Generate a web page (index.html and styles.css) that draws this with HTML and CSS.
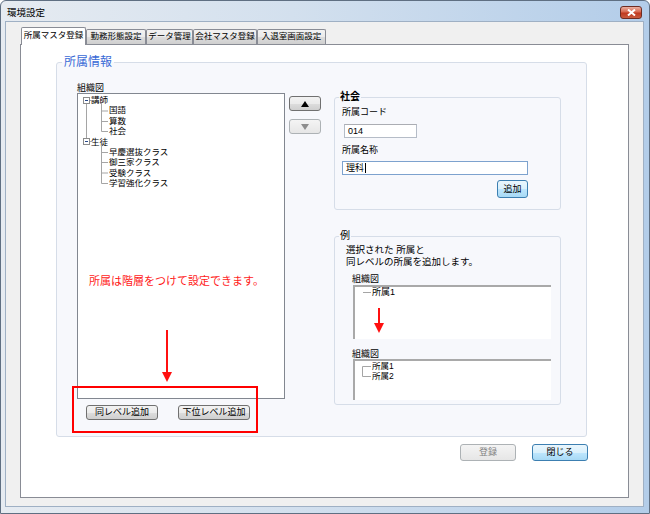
FILE: index.html
```html
<!DOCTYPE html>
<html lang="ja">
<head>
<meta charset="utf-8">
<title>環境設定</title>
<link rel="stylesheet" href="styles.css">
</head>
<body>
<div class="window">
  <div class="titlebar">
    <span class="title">環境設定</span>
    <span class="close">
      <svg width="9" height="7" viewBox="0 0 9 7"><path d="M1 0.5 L8 6.5 M8 0.5 L1 6.5" stroke="#fff" stroke-width="2" fill="none"/></svg>
    </span>
  </div>
  <div class="client">
    <div class="tabs">
      <div class="tab active t1">所属マスタ登録</div>
      <div class="tab t2">勤務形態設定</div>
      <div class="tab t3">データ管理</div>
      <div class="tab t4">会社マスタ登録</div>
      <div class="tab t5">入退室画面設定</div>
    </div>
    <div class="panel">
      <div class="group main">
        <div class="legend main-legend">所属情報</div>
        <div class="group-body">
          <div class="tree-col">
            <div class="lbl">組織図</div>
            <div class="tree">
              <svg class="tree-lines" width="40" height="96" viewBox="0 0 40 96">
                <g stroke="#a5a5a5" fill="none" stroke-width="1">
                  <path d="M8.5 9.5 V44.5"/>
                  <path d="M11.5 6.5 H14"/>
                  <path d="M11.5 47.5 H14"/>
                  <path d="M23.5 9 V37.5 M23.5 17 H30 M23.5 27.5 H30 M23.5 37.5 H30"/>
                  <path d="M23.5 51 V89.5 M23.5 58.5 H30 M23.5 68.5 H30 M23.5 79 H30 M23.5 89.5 H30"/>
                </g>
                <g stroke="#8c8c8c" fill="#fff">
                  <rect x="5.5" y="3.5" width="6" height="6"/>
                  <rect x="5.5" y="44.5" width="6" height="6"/>
                </g>
                <g stroke="#2a4a8a" stroke-width="1">
                  <path d="M7 6.5 H10 M7 47.5 H10"/>
                </g>
              </svg>
              <div class="node l1">講師</div>
              <div class="node l2">国語</div>
              <div class="node l2">算数</div>
              <div class="node l2">社会</div>
              <div class="node l1">生徒</div>
              <div class="node l2">早慶選抜クラス</div>
              <div class="node l2">御三家クラス</div>
              <div class="node l2">受験クラス</div>
              <div class="node l2">学習強化クラス</div>
            </div>
            <div class="btn-row">
              <button class="btn wide">同レベル追加</button>
              <button class="btn wide">下位レベル追加</button>
            </div>
          </div>
          <div class="updown">
            <button class="btn arrow">
              <svg width="8" height="6" viewBox="0 0 8 6"><path d="M4 0 L8 6 H0 Z" fill="#000"/></svg>
            </button>
            <button class="btn arrow disabled">
              <svg width="8" height="6" viewBox="0 0 8 6"><path d="M0 0 H8 L4 6 Z" fill="#8d8d8d"/></svg>
            </button>
          </div>
          <div class="right-col">
            <div class="group sub shakai">
              <div class="legend sub-legend bold">社会</div>
              <div class="f-label first">所属コード</div>
              <div class="input code">014</div>
              <div class="f-label second">所属名称</div>
              <div class="input name focus">理科<span class="caret"></span></div>
              <div class="add-row">
                <button class="btn blue add">追加</button>
              </div>
            </div>
            <div class="group sub example">
              <div class="legend sub-legend">例</div>
              <div class="ex-text">選択された 所属と<br>同レベルの所属を追加します。</div>
              <div class="ex-label first">組織図</div>
              <div class="ex-box box1">
                <div class="ex-row"><span class="tick"></span>所属1</div>
                <svg class="ex-arrow" width="10" height="25" viewBox="0 0 10 25"><rect x="4" y="0" width="2" height="16" fill="#ff1010"/><path d="M0 15 H10 L5 25 Z" fill="#ff1010"/></svg>
              </div>
              <div class="ex-label second">組織図</div>
              <div class="ex-box box2">
                <svg class="bracket" width="10" height="12" viewBox="0 0 10 12"><path d="M0.5 0.5 H9 M0.5 0.5 V10.5 H9" stroke="#a5a5a5" fill="none"/></svg>
                <div class="ex-row2">所属1</div>
                <div class="ex-row2">所属2</div>
              </div>
            </div>
          </div>
        </div>
        <div class="red-note">所属は階層をつけて設定できます。</div>
        <svg class="red-arrow" width="12" height="52" viewBox="0 0 12 52"><rect x="5" y="0" width="2" height="43" fill="#ff1010"/><path d="M1 42 H11 L6 52 Z" fill="#ff1010"/></svg>
        <div class="red-rect"></div>
      </div>
      <div class="footer">
        <button class="btn foot disabled">登録</button>
        <button class="btn foot blue">閉じる</button>
      </div>
    </div>
  </div>
</div>
</body>
</html>
```
FILE: styles.css
```css
* { box-sizing: border-box; }
html, body { margin: 0; padding: 0; }
body {
  width: 650px;
  height: 514px;
  font-family: "Liberation Sans", "Noto Sans CJK JP", sans-serif;
  font-size: 9px;
  color: #000;
  background: #fff;
}
.window {
  width: 650px;
  height: 514px;
  border: 1px solid #5f6f82;
  border-radius: 6px 6px 0 0;
  padding: 0 5px 6px 4px;
  background: linear-gradient(to right, #e6ebf1 0%, #d3e0ee 45%, #b3cde9 100%);
  display: flex;
  flex-direction: column;
}
.titlebar {
  height: 20px;
  display: flex;
  align-items: flex-start;
  justify-content: space-between;
}
.title {
  margin: 6px 0 0 2px;
  font-size: 9.5px;
  line-height: 11px;
}
.close {
  width: 22px;
  height: 13px;
  margin: 5px 2px 0 0;
  border: 1px solid #6e2c22;
  border-radius: 3px;
  background: linear-gradient(#eab0a2 0%, #d7684f 45%, #c0391f 55%, #c85b3f 100%);
  display: flex;
  align-items: center;
  justify-content: center;
}
.client {
  height: 486px;
  border: 1px solid #9fb0c4;
  background: #f0f0f0;
  display: flex;
  flex-direction: column;
}
.tabs {
  display: flex;
  align-items: flex-end;
  height: 17px;
  margin-top: 5px;
  padding-left: 15px;
}
.tab {
  height: 15px;
  border: 1px solid #898c95;
  border-bottom: none;
  border-radius: 2px 2px 0 0;
  background: linear-gradient(#f2f2f2 0%, #ebebeb 50%, #dddddd 51%, #cfcfcf 100%);
  font-size: 8.5px;
  line-height: 13px;
  text-align: center;
  white-space: nowrap;
  overflow: hidden;
}
.tab.active {
  height: 18px;
  margin-bottom: -1px;
  position: relative;
  z-index: 2;
  background: #fff;
  line-height: 15px;
}
.t1 { width: 65px; }
.t2 { width: 60px; }
.t3 { width: 47px; }
.t4 { width: 64px; }
.t5 { width: 69px; }
.panel {
  margin-left: 14px;
  width: 609px;
  height: 454px;
  border: 1px solid #898c95;
  background: #fff;
  display: flex;
  flex-direction: column;
}
.group {
  position: relative;
  border: 1px solid #d6dde8;
  border-radius: 3px;
}
.main {
  margin: 17px 0 0 35px;
  width: 531px;
  height: 375px;
  background: #f7f8fc;
}
.legend {
  position: absolute;
  white-space: nowrap;
}
.main-legend {
  left: 5px;
  top: -9px;
  padding: 0 2px;
  font-size: 12px;
  line-height: 16px;
  color: #3a6ad6;
  background: linear-gradient(#fff 50%, #f7f8fc 50%);
}
.sub-legend {
  left: 4px;
  top: -7px;
  padding: 0 1px;
  font-size: 10px;
  line-height: 12px;
  background: #f7f8fc;
}
.bold { font-weight: bold; }
.group-body {
  display: flex;
  align-items: flex-start;
}
.tree-col {
  margin: 20px 0 0 20px;
  width: 208px;
}
.lbl {
  line-height: 10px;
  font-size: 9px;
}
.tree {
  position: relative;
  height: 306px;
  border: 1px solid #828790;
  background: #fff;
  padding-top: 1px;
}
.tree-lines {
  position: absolute;
  left: 0;
  top: 0;
}
.node {
  height: 10.4px;
  line-height: 10.4px;
  font-size: 8.5px;
  white-space: nowrap;
}
.node.l1 { padding-left: 13px; }
.node.l2 { padding-left: 31px; }
.btn {
  margin: 0;
  padding: 0;
  border: 1px solid #707070;
  border-radius: 3px;
  background: linear-gradient(#f2f2f2 0%, #ebebeb 50%, #dddddd 51%, #cfcfcf 100%);
  font-family: inherit;
  font-size: 9px;
  color: #000;
  line-height: 1;
  display: flex;
  align-items: center;
  justify-content: center;
}
.btn.blue {
  border-color: #3c7fb1;
  background: linear-gradient(#eaf6fd 0%, #d9f0fc 50%, #bee6fd 51%, #a7d9f5 100%);
}
.btn.disabled {
  border-color: #adb2b5;
  background: linear-gradient(#f4f4f4, #e6e6e6);
  color: #838383;
}
.btn-row {
  display: flex;
  gap: 20px;
  margin: 6px 0 0 9px;
}
.wide {
  width: 72px;
  height: 15px;
}
.updown {
  margin: 33px 0 0 4px;
  display: flex;
  flex-direction: column;
  gap: 8px;
}
.arrow {
  width: 32px;
  height: 15px;
}
.right-col {
  margin: 34px 0 0 13px;
  width: 227px;
}
.shakai {
  height: 113px;
}
.f-label {
  font-size: 9px;
  line-height: 11px;
  padding-left: 7px;
}
.f-label.first { margin-top: 9px; }
.f-label.second { margin-top: 7px; }
.input {
  height: 14px;
  border: 1px solid #b5bcc7;
  border-top-color: #abadb3;
  background: #fff;
  font-size: 9px;
  line-height: 12px;
  padding-left: 3px;
  display: flex;
  align-items: center;
}
.input.code {
  margin: 6px 0 0 9px;
  width: 73px;
}
.input.name {
  margin: 5px 0 0 7px;
  width: 186px;
  border-color: #7da2ce;
}
.caret {
  display: inline-block;
  width: 1px;
  height: 10px;
  background: #000;
  margin-left: 1px;
}
.add-row {
  margin: 5px 0 0 162px;
}
.add {
  width: 31px;
  height: 18px;
}
.example {
  margin-top: 26px;
  height: 169px;
}
.ex-text {
  margin: 7px 0 0 11px;
  font-size: 9.5px;
  line-height: 12px;
  white-space: nowrap;
}
.ex-label {
  padding-left: 17px;
  font-size: 9px;
}
.ex-label.first { margin-top: 6px; line-height: 11px; }
.ex-label.second { margin-top: 11px; line-height: 9px; }
.ex-box {
  position: relative;
  margin-left: 18px;
  width: 198px;
  background: #fff;
  border-top: 2px solid #a9a9a9;
  border-left: 2px solid #a9a9a9;
}
.box1 { height: 54px; }
.box2 { height: 41px; }
.ex-row {
  display: flex;
  align-items: center;
  height: 11px;
  padding-left: 8px;
  font-size: 9px;
  line-height: 11px;
}
.tick {
  width: 8px;
  border-top: 1px solid #a5a5a5;
  margin-right: 1px;
}
.ex-arrow {
  position: absolute;
  left: 19px;
  top: 21px;
}
.bracket {
  position: absolute;
  left: 7px;
  top: 5px;
}
.ex-row2 {
  padding-left: 17px;
  font-size: 8.5px;
  line-height: 10px;
  height: 10px;
}
.red-note {
  position: absolute;
  left: 32px;
  top: 212px;
  font-size: 11px;
  line-height: 13px;
  color: #ff1a1a;
  white-space: nowrap;
}
.red-arrow {
  position: absolute;
  left: 104px;
  top: 267px;
}
.red-rect {
  position: absolute;
  left: 15px;
  top: 323px;
  width: 186px;
  height: 47px;
  border: 2px solid #ff0000;
}
.footer {
  display: flex;
  justify-content: flex-end;
  gap: 16px;
  margin-top: 7px;
  padding-right: 40px;
}
.foot {
  width: 56px;
  height: 17px;
}
```
